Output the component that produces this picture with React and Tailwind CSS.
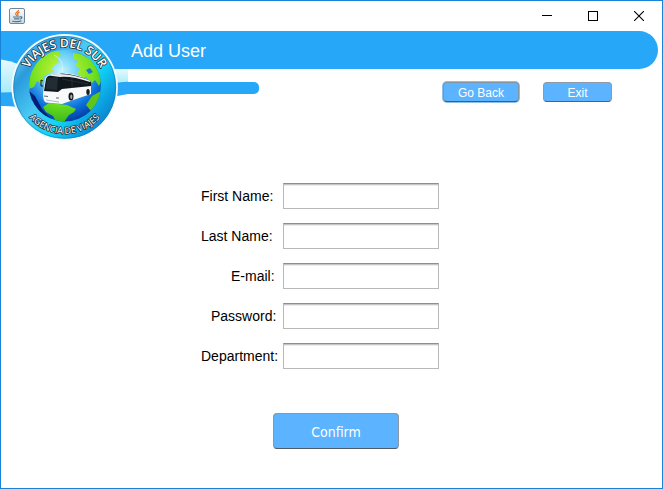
import React from "react";

const FIELDS = [
  { id: "first-name", label: "First Name:", type: "text", indent: "" },
  { id: "last-name", label: "Last Name:", type: "text", indent: "" },
  { id: "email", label: "E-mail:", type: "email", indent: "pl-[30px]" },
  { id: "password", label: "Password:", type: "password", indent: "pl-[10px]" },
  { id: "department", label: "Department:", type: "text", indent: "" },
];

function JavaIcon() {
  return (
    <svg width="16" height="16" viewBox="0 0 16 16" aria-hidden="true">
      <defs>
        <linearGradient id="cupBg" x1="0" y1="0" x2="0" y2="1">
          <stop offset="0" stopColor="#fdfefe" />
          <stop offset="1" stopColor="#c9d8e2" />
        </linearGradient>
      </defs>
      <rect x="0.5" y="0.5" width="15" height="15" rx="1.5" fill="url(#cupBg)" stroke="#6f8798" />
      <path d="M9.5 1.8C10 3.6 6.1 4.6 6.7 6.2C6.9 7 7.8 7.5 7.8 8.2M10.6 4.2C8.5 4.9 8.2 5.8 8.9 6.6C9.3 7.2 8.8 7.8 8.6 8.2" fill="none" stroke="#e8772a" strokeWidth="1.3" />
      <path d="M4 9H11.2M5 10.8H10.4M11 8.8C13.6 8.3 13.4 10.5 11 11M3.2 13C5 14 10.5 13.9 12.4 12.8" fill="none" stroke="#4f7894" strokeWidth="1.2" />
    </svg>
  );
}

function Logo() {
  return (
    <svg className="h-[112px] w-[127px] shrink-0" viewBox="1 31 127 112" role="img" aria-label="Viajes del Sur">
      <defs>
        <linearGradient id="pale" x1="0" y1="0" x2="0" y2="1">
          <stop offset="0" stopColor="#e6fafd" />
          <stop offset="1" stopColor="#a5ebf9" />
        </linearGradient>
        <linearGradient id="disc" x1="0" y1="0.1" x2="1" y2="0.9">
          <stop offset="0" stopColor="#8bdcf8" />
          <stop offset="0.2" stopColor="#2a9bdc" />
          <stop offset="0.42" stopColor="#49c9f3" />
          <stop offset="0.62" stopColor="#12d5f7" />
          <stop offset="0.8" stopColor="#0a9fe0" />
          <stop offset="1" stopColor="#1268b4" />
        </linearGradient>
        <radialGradient id="ocean" cx="0.45" cy="0.3" r="0.76">
          <stop offset="0" stopColor="#c4f5ff" />
          <stop offset="0.35" stopColor="#62cbf6" />
          <stop offset="0.7" stopColor="#0b70dc" />
          <stop offset="1" stopColor="#052a91" />
        </radialGradient>
        <radialGradient id="land" gradientUnits="userSpaceOnUse" cx="62" cy="72" r="58">
          <stop offset="0" stopColor="#d2f53c" />
          <stop offset="0.55" stopColor="#6ee01f" />
          <stop offset="1" stopColor="#26a81c" />
        </radialGradient>
        <clipPath id="globeClip">
          <circle cx="65" cy="85.5" r="36" />
        </clipPath>
        <path id="arcTop" d="M23.7 88.3A41 41 0 0 1 105.7 88.3" />
        <path id="arcBottom" d="M18.2 87.3A46.5 46.5 0 0 0 111.2 87.3" />
      </defs>

      <rect x="1" y="31" width="127" height="38" fill="#27a7f8" />
      <path d="M1 59.5Q10 60.5 18 64V93H1Z" fill="url(#pale)" />
      <path d="M1 92.5L22 92V108Q12 105.5 1 106Z" fill="#27a7f5" />
      <path d="M108 69H128V81L108 84Z" fill="url(#pale)" />
      <path d="M112 83L128 81.5V94L112 97Z" fill="#27a7f5" />

      <circle cx="64.7" cy="87.3" r="52.3" fill="url(#disc)" stroke="#f4fcff" strokeWidth="1.8" />
      <circle cx="64.7" cy="87.3" r="51" fill="none" stroke="#1678b4" strokeOpacity="0.5" strokeWidth="1" />

      <circle cx="65" cy="85.5" r="36" fill="url(#ocean)" />
      <g clipPath="url(#globeClip)">
        <path d="M29 82L31 69L38 59L49 52L58 51L61 55L57 58L59 62L55 65L51 69L54 71L48 74L44 76L42 84L37 81L34 87L29 89Z" fill="url(#land)" />
        <path d="M73 53L80 54L90 59L98 69L102 79L99 86L95 80L92 83L86 77L81 77L77 73L80 69L75 65L78 61L73 58Z" fill="url(#land)" />
        <path d="M86 70L90 68L93 72L89 74Z" fill="#1579d3" />
        <path d="M43 107L49 103L58 104L67 105L76 109L74 112L69 115L64 122H56L53 116L46 112Z" fill="url(#land)" />
        <path d="M92 96L101 91L99 105L91 111L86 105Z" fill="#5fc51b" />
        <path d="M29 91L35 96L42 109L51 119L40 115L30 102Z" fill="#041f77" />
        <path d="M54 55Q65 60 62 73" fill="none" stroke="#d4ffff" strokeWidth="1" opacity="0.6" />
      </g>

      <path d="M43 94L45 79Q46 75 51 74.5L61 73Q76 73 91 81V94L73 100L62 104L46 102.5Q43 101 43 94Z" fill="#f7f9fa" />
      <path d="M44 91L46 79Q47 75.5 52 75L62 73.5Q76 74 91 81V86L62 89L58 92Z" fill="#11181d" />
      <path d="M47 78L58 77L57 90L46 89Z" fill="#222d33" />
      <path d="M49 75.5Q65 71 91 81L90 82Q72 76 60 77Z" fill="#e5ecef" />
      <path d="M62 79L88 84M72 78V88" fill="none" stroke="#333f46" strokeWidth="0.6" />
      <path d="M46 100L59 102" fill="none" stroke="#9aa8b0" strokeWidth="0.8" />
      <path d="M44 96L48 96.5M56 98L59 98" stroke="#5b6972" strokeWidth="1.2" />
      <ellipse cx="71" cy="96.5" rx="2.5" ry="4" fill="#111619" />
      <ellipse cx="71.3" cy="96.7" rx="1.1" ry="2.2" fill="#a5adb2" />
      <ellipse cx="88" cy="92" rx="1.7" ry="3" fill="#151b1f" />
      <path d="M43 81L41 80V86L43 86" fill="none" stroke="#14191d" strokeWidth="1" />

      <g fill="#ffffff" stroke="#26323a" strokeWidth="1.6" paintOrder="stroke" strokeLinejoin="round" fontFamily="'Open Sans', 'Noto Sans', sans-serif" textAnchor="middle">
        <text fontSize="12" fontWeight="600">
          <textPath href="#arcTop" startOffset="50%">VIAJES DEL SUR</textPath>
        </text>
        <text fontSize="9" fontWeight="400">
          <textPath href="#arcBottom" startOffset="50%">AGENCIA DE VIAJES</textPath>
        </text>
      </g>
    </svg>
  );
}

function TitleBar() {
  return (
    <div className="flex h-[30px] items-center justify-between pl-2">
      <JavaIcon />
      <div className="flex h-full">
        <button type="button" aria-label="Minimize" className="flex w-[46px] items-center justify-center">
          <svg width="10" height="10" viewBox="0 0 10 10" shapeRendering="crispEdges" aria-hidden="true">
            <path d="M0 4.5H10" stroke="#000" />
          </svg>
        </button>
        <button type="button" aria-label="Maximize" className="flex w-[46px] items-center justify-center">
          <svg width="10" height="10" viewBox="0 0 10 10" shapeRendering="crispEdges" aria-hidden="true">
            <rect x="0.5" y="0.5" width="9" height="9" fill="none" stroke="#000" />
          </svg>
        </button>
        <button type="button" aria-label="Close" className="flex w-[46px] items-center justify-center">
          <svg width="10" height="10" viewBox="0 0 10 10" aria-hidden="true">
            <path d="M0 0L10 10M10 0L0 10" stroke="#000" strokeWidth="1.1" />
          </svg>
        </button>
      </div>
    </div>
  );
}

export default function App() {
  return (
    <div className="flex min-h-screen flex-col border border-[#1883d7] bg-white font-['Liberation_Sans',Arial,sans-serif] text-black">
      <TitleBar />

      <header className="flex">
        <Logo />
        <div className="flex-1">
          <div className="mr-1 flex h-[38px] items-center rounded-r-[24px] bg-[#27a7f8] pt-0.5 pl-[3px]">
            <h1 className="text-lg text-white">Add User</h1>
          </div>
          <div className="flex items-start justify-between pt-[13px] pr-[50px]">
            <div className="h-3 w-[131px] rounded-r-[5px] bg-[#27a7f8]" />
            <nav className="flex gap-6">
              <button type="button" className="h-5 w-[76px] rounded-[4px] border border-[#8394a3] border-b-[#4a5b6a] bg-[#5cb3ff] pt-0.5 text-xs text-white ring-1 ring-[#8fbfe6]">
                Go Back
              </button>
              <button type="button" className="h-5 w-[69px] rounded-[4px] border border-[#8e9aa5] border-b-[#55626e] bg-[#5cb3ff] pt-0.5 text-xs text-white">
                Exit
              </button>
            </nav>
          </div>
        </div>
      </header>

      <form className="mx-auto mt-10 w-[261px]" onSubmit={(e) => e.preventDefault()}>
        <div className="flex flex-col gap-[14px]">
          {FIELDS.map((f) => (
            <div key={f.id} className="flex items-center">
              <label htmlFor={f.id} className={`w-[82px] text-sm whitespace-nowrap ${f.indent}`}>
                {f.label}
              </label>
              <input
                id={f.id}
                type={f.type}
                className="h-[26px] w-[156px] border border-[#b8b8b8] border-t-[#8e8e8e] bg-white px-1 text-sm shadow-[inset_0_1px_0_#c6c6c6,inset_0_2px_0_#ededed] outline-none"
              />
            </div>
          ))}
        </div>
        <button
          type="submit"
          className="mt-11 ml-[72px] h-9 w-[126px] rounded-[4px] border border-[#8b98a4] border-b-[#4f5d6a] bg-[#5cb3ff] pt-0.5 font-['DejaVu_Sans_Condensed','DejaVu_Sans',sans-serif] text-sm text-white"
        >
          Confirm
        </button>
      </form>
    </div>
  );
}
